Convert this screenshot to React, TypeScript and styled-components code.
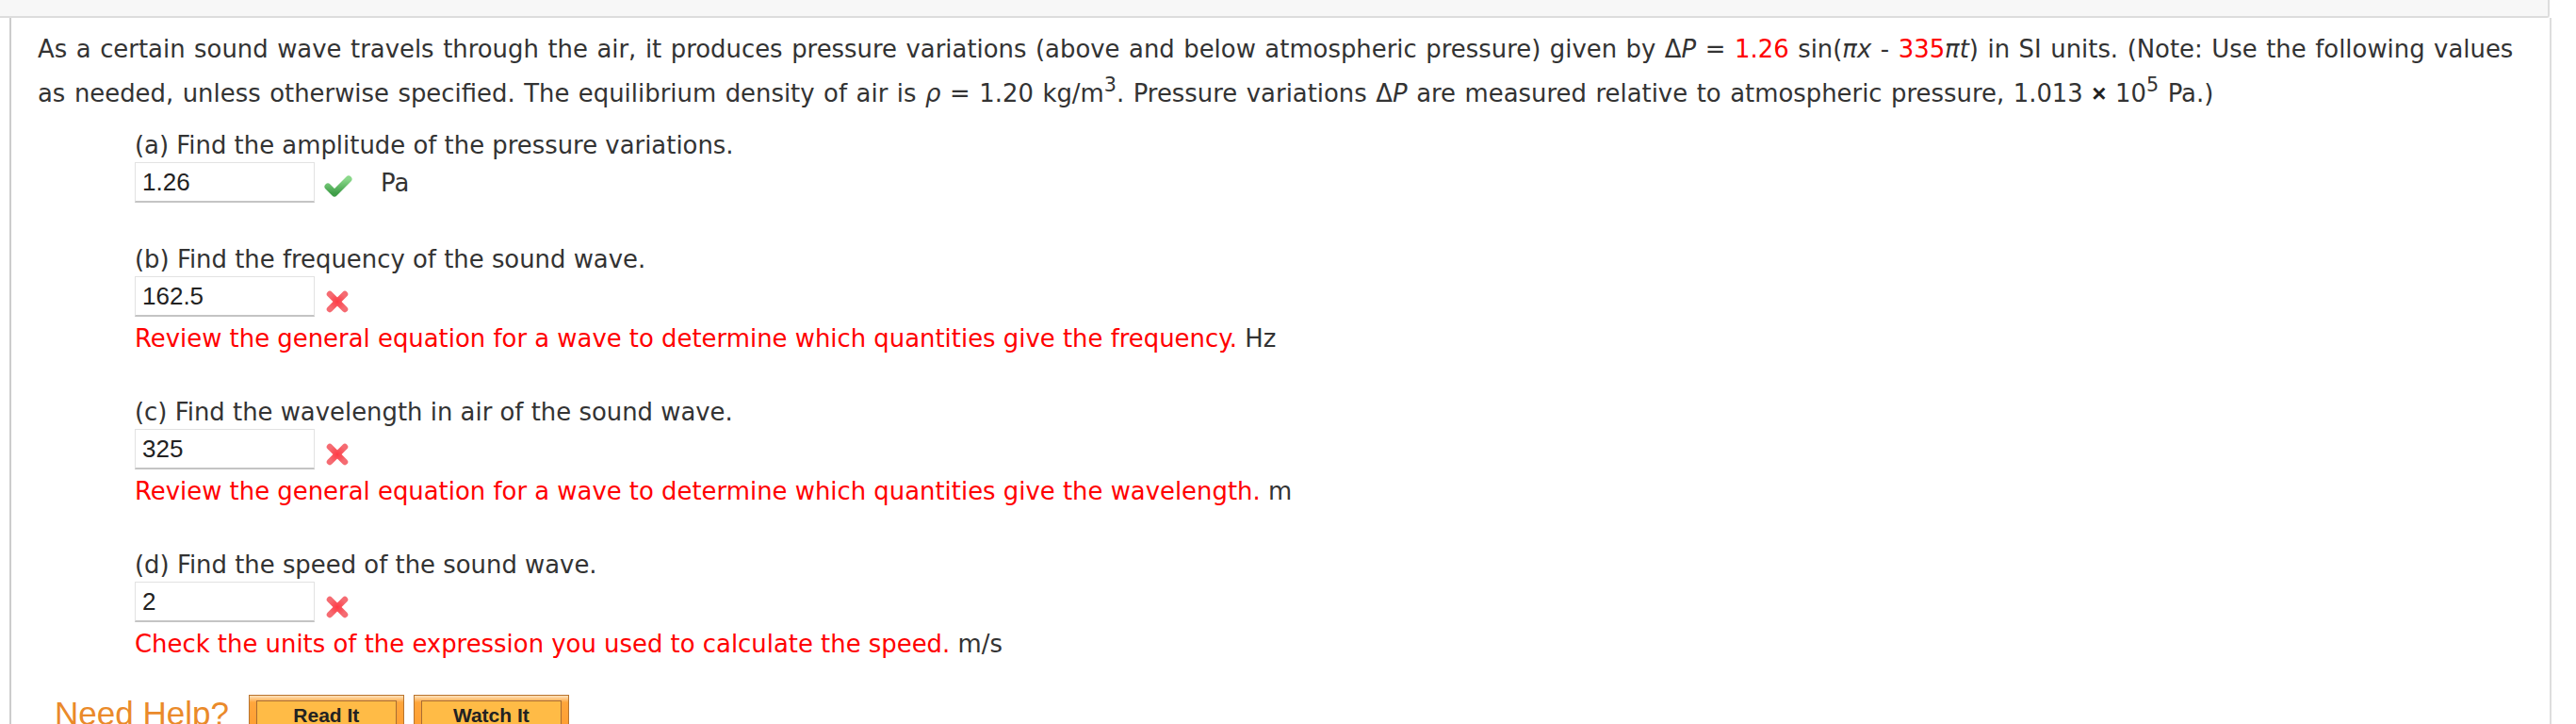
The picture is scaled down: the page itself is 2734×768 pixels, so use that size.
import React from "react";
import styled, { createGlobalStyle } from "styled-components";

const GlobalStyle = createGlobalStyle`
  html, body {
    margin: 0;
    padding: 0;
    background: #ffffff;
  }
  body {
    font-family: "DejaVu Sans", Verdana, sans-serif;
    color: #333333;
    overflow: hidden;
  }
`;

type Part = {
  letter: string;
  question: string;
  value: string;
  correct: boolean;
  feedback?: string;
  unit: string;
};

const parts: Part[] = [
  { letter: "a", question: "Find the amplitude of the pressure variations.", value: "1.26", correct: true, unit: "Pa" },
  {
    letter: "b",
    question: "Find the frequency of the sound wave.",
    value: "162.5",
    correct: false,
    feedback: "Review the general equation for a wave to determine which quantities give the frequency.",
    unit: "Hz",
  },
  {
    letter: "c",
    question: "Find the wavelength in air of the sound wave.",
    value: "325",
    correct: false,
    feedback: "Review the general equation for a wave to determine which quantities give the wavelength.",
    unit: "m",
  },
  {
    letter: "d",
    question: "Find the speed of the sound wave.",
    value: "2",
    correct: false,
    feedback: "Check the units of the expression you used to calculate the speed.",
    unit: "m/s",
  },
];

const CheckIcon = () => (
  <svg width="32" height="26" viewBox="0 0 32 26">
    <defs>
      <linearGradient id="chk" x1="0" y1="0" x2="0" y2="1">
        <stop offset="0" stopColor="#8ad88a" />
        <stop offset="1" stopColor="#3f9e48" />
      </linearGradient>
    </defs>
    <polyline
      points="5,14 12,21 27,6"
      fill="none"
      stroke="url(#chk)"
      strokeWidth="7"
      strokeLinecap="round"
      strokeLinejoin="round"
    />
  </svg>
);

const CrossIcon = () => (
  <svg width="26" height="26" viewBox="0 0 26 26">
    <defs>
      <radialGradient id="crs" cx="0.5" cy="0.5" r="0.6">
        <stop offset="0" stopColor="#ff3a44" />
        <stop offset="1" stopColor="#f56b72" />
      </radialGradient>
    </defs>
    <g stroke="url(#crs)" strokeWidth="6.5" strokeLinecap="round">
      <line x1="5" y1="5" x2="21" y2="21" />
      <line x1="21" y1="5" x2="5" y2="21" />
    </g>
  </svg>
);

export default function App() {
  return (
    <>
      <GlobalStyle />
      <TopBar />
      <Panel>
        <Intro>
          As a certain sound wave travels through the air, it produces pressure variations (above and below
          atmospheric pressure) given by Δ<i>P</i> = <Red>1.26</Red> sin(<i>πx</i> - <Red>335</Red>
          <i>πt</i>) in SI units. (Note: Use the following values as needed, unless otherwise specified. The
          equilibrium density of air is <i>ρ</i> = 1.20 kg/m<sup>3</sup>. Pressure variations Δ<i>P</i> are
          measured relative to atmospheric pressure, 1.013 <Times>×</Times> 10<sup>5</sup> Pa.)
        </Intro>
        <Questions>
          {parts.map((p) => (
            <Question key={p.letter}>
              <Label>
                ({p.letter}) {p.question}
              </Label>
              <AnswerRow>
                <AnswerInput readOnly value={p.value} />
                <Mark $correct={p.correct}>{p.correct ? <CheckIcon /> : <CrossIcon />}</Mark>
                {p.correct && <Unit>{p.unit}</Unit>}
              </AnswerRow>
              {p.feedback && (
                <Feedback>
                  <Red>{p.feedback}</Red> {p.unit}
                </Feedback>
              )}
            </Question>
          ))}
        </Questions>
        <HelpRow>
          <HelpTitle>Need Help?</HelpTitle>
          <HelpButton>
            <HelpInner>Read It</HelpInner>
          </HelpButton>
          <HelpButton>
            <HelpInner>Watch It</HelpInner>
          </HelpButton>
        </HelpRow>
      </Panel>
    </>
  );
}

const TopBar = styled.div`
  width: 2704px;
  height: 17px;
  background: #f7f7f7;
  border-bottom: 2px solid #dddddd;
  border-right: 2px solid #dddddd;
  border-bottom-right-radius: 3px;
`;

const Panel = styled.div`
  box-sizing: border-box;
  margin-left: 10px;
  width: 2698px;
  height: 749px;
  border-left: 2px solid #cccccc;
  border-right: 2px solid #dddddd;
  padding: 10px 6px 0 28px;
`;

const Intro = styled.p`
  margin: 0;
  font-size: 25.9px;
  line-height: 47px;
  word-spacing: 1.3px;
  color: #333333;

  sup {
    font-size: 0.8em;
    line-height: 0;
    vertical-align: 0.55em;
  }
`;

const Red = styled.span`
  color: #ff0000;
`;

const Times = styled.span`
  font-family: "Liberation Sans", Arial, sans-serif;
  font-weight: bold;
  color: #222222;
`;

const Questions = styled.div`
  margin-top: 13px;
  padding-left: 103px;
  display: flex;
  flex-direction: column;
  gap: 42px;
`;

const Question = styled.div`
  display: flex;
  flex-direction: column;
`;

const Label = styled.div`
  font-size: 25.9px;
  line-height: 36px;
  color: #333333;
`;

const AnswerRow = styled.div`
  display: flex;
  align-items: center;
  height: 43px;
`;

const AnswerInput = styled.input`
  box-sizing: border-box;
  width: 191px;
  height: 43px;
  margin: 0;
  padding: 0 7px;
  border: 1px solid #e2e2e2;
  border-bottom: 2px solid #c4c4c4;
  border-radius: 0;
  background: #ffffff;
  font-family: "Liberation Sans", Arial, sans-serif;
  font-size: 26px;
  color: #222222;
  outline: none;
`;

const Mark = styled.span<{ $correct: boolean }>`
  display: flex;
  margin-left: ${(p) => (p.$correct ? "9px" : "11px")};
  margin-top: ${(p) => (p.$correct ? "6px" : "10px")};
`;

const Unit = styled.span`
  margin-left: 29px;
  font-size: 25.9px;
  color: #333333;
`;

const Feedback = styled.div`
  margin-top: 5px;
  font-size: 25.9px;
  line-height: 36px;
  color: #333333;
`;

const HelpRow = styled.div`
  display: flex;
  align-items: flex-start;
  margin-top: 36px;
  margin-left: 18px;
`;

const HelpTitle = styled.span`
  font-family: "Liberation Sans", Arial, sans-serif;
  font-size: 35px;
  line-height: 40px;
  color: #ea8a2a;
  margin-right: 21px;
`;

const HelpButton = styled.div`
  box-sizing: border-box;
  width: 165px;
  margin-right: 10px;
  padding: 5px 7px;
  border: 1px solid #b8732e;
  background: linear-gradient(to bottom, #ffe2bd 0, #ffa63c 7px, #ff9d30 100%);
`;

const HelpInner = styled.div`
  height: 30px;
  border: 1px solid #a86c33;
  background: #ffbb46;
  font-family: "Liberation Sans", Arial, sans-serif;
  font-weight: bold;
  font-size: 21px;
  line-height: 30px;
  text-align: center;
  color: #222222;
`;
